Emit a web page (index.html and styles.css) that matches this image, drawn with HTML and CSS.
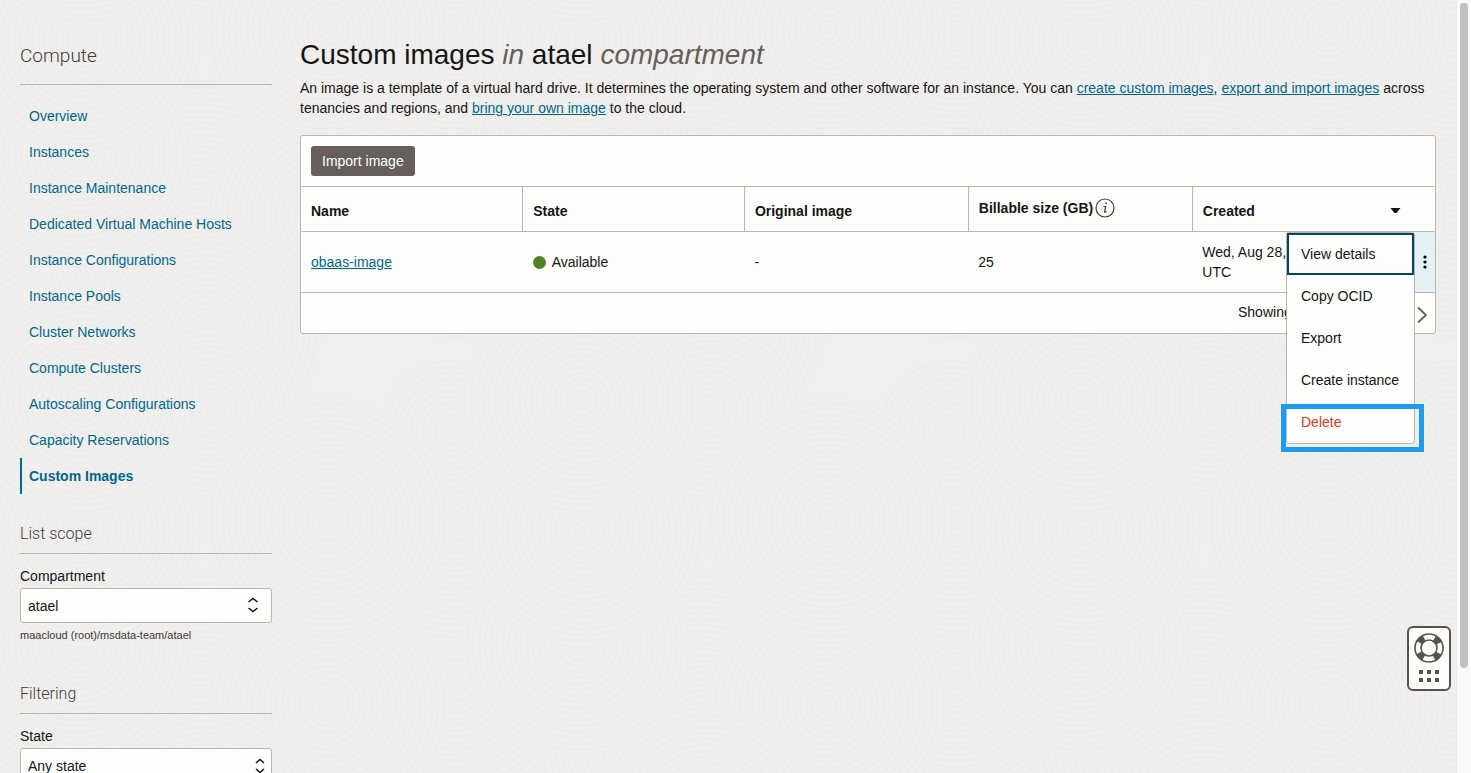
FILE: index.html
```html
<!DOCTYPE html>
<html lang="en">
<head>
<meta charset="utf-8">
<title>Custom images</title>
<link rel="stylesheet" href="styles.css">
</head>
<body>
<svg class="texture" aria-hidden="true">
  <defs>
    <radialGradient id="rings" gradientUnits="userSpaceOnUse" cx="0" cy="0" r="6" spreadMethod="repeat">
      <stop offset="0" stop-color="#f1f0ee"/>
      <stop offset=".5" stop-color="#edecea"/>
      <stop offset="1" stop-color="#f1f0ee"/>
    </radialGradient>
    <g id="tile" fill="url(#rings)">
      <circle r="160" transform="translate(200 330)"/>
      <circle r="150" transform="translate(455 280)"/>
      <circle r="112" transform="translate(78 245)"/>
      <circle r="122" transform="translate(455 120)"/>
      <circle r="70" transform="translate(450 30)"/>
      <circle r="118" transform="translate(83 130)"/>
      <circle r="90" transform="translate(210 10)"/>
      <circle r="120" transform="translate(327 305)"/>
      <circle r="122" transform="translate(328 120)"/>
      <circle r="116" transform="translate(82 0)"/>
      <circle r="116" transform="translate(205 420)"/>
    </g>
    <g id="column">
      <use href="#tile" y="-580"/>
      <use href="#tile" y="-90"/>
      <use href="#tile" y="400"/>
    </g>
  </defs>
  <use href="#column" x="-500"/>
  <use href="#column"/>
  <use href="#column" x="500"/>
  <use href="#column" x="1000"/>
</svg>

<div class="page">
  <aside class="sidebar">
    <h2 class="side-title">Compute</h2>
    <nav class="nav">
      <a class="nav-link" href="#">Overview</a>
      <a class="nav-link" href="#">Instances</a>
      <a class="nav-link" href="#">Instance Maintenance</a>
      <a class="nav-link" href="#">Dedicated Virtual Machine Hosts</a>
      <a class="nav-link" href="#">Instance Configurations</a>
      <a class="nav-link" href="#">Instance Pools</a>
      <a class="nav-link" href="#">Cluster Networks</a>
      <a class="nav-link" href="#">Compute Clusters</a>
      <a class="nav-link" href="#">Autoscaling Configurations</a>
      <a class="nav-link" href="#">Capacity Reservations</a>
      <a class="nav-link current" href="#" aria-current="page">Custom Images</a>
    </nav>

    <section class="side-section">
      <h3 class="side-heading">List scope</h3>
      <label class="field-label" for="compartment">Compartment</label>
      <div class="select-wrap picker">
        <select class="select" id="compartment"><option>atael</option></select>
        <svg class="select-icon" viewBox="0 0 12 16"><path d="M1.5 5 6 1.5 10.500 5M1.500 11 6 14.500 10.500 11"/></svg>
      </div>
      <p class="hint">maacloud (root)/msdata-team/atael</p>
    </section>

    <section class="side-section filtering">
      <h3 class="side-heading">Filtering</h3>
      <label class="field-label" for="state">State</label>
      <div class="select-wrap">
        <select class="select" id="state"><option>Any state</option></select>
        <svg class="select-icon" viewBox="0 0 12 16"><path d="M2 5 6 1.500 10 5M2 11 6 14.500 10 11"/></svg>
      </div>
    </section>
  </aside>

  <main class="main">
    <h1 class="title">Custom images <em>in</em> atael <em>compartment</em></h1>
    <p class="intro">An image is a template of a virtual hard drive. It determines the operating system and other software for an instance. You can <a href="#">create custom images</a>, <a href="#">export and import images</a> across tenancies and regions, and <a href="#">bring your own image</a> to the cloud.</p>

    <div class="panel">
      <div class="toolbar"><button class="btn" type="button">Import image</button></div>
      <table class="table">
        <colgroup><col class="w-a"><col class="w-a"><col class="w-b"><col class="w-b"><col><col class="w-menu"></colgroup>
        <thead>
          <tr>
            <th scope="col">Name</th>
            <th scope="col">State</th>
            <th scope="col">Original image</th>
            <th scope="col"><span class="with-info">Billable size (GB)
              <svg class="info" viewBox="0 0 20 20"><circle cx="10" cy="10" r="9"/><path class="dot" d="M10.500 4.500h1.400v1.700h-1.400z"/><path d="M8.500 8.500h2.200L9.500 14q0 .7 2-.5"/></svg></span></th>
            <th scope="col" colspan="2"><span class="sorted">Created <svg class="caret" viewBox="0 0 10 6"><path d="M0 0h10L6 5H4z"/></svg></span></th>
          </tr>
        </thead>
        <tbody>
          <tr>
            <td><a href="#">obaas-image</a></td>
            <td><span class="status"><i class="status-dot"></i>Available</span></td>
            <td>-</td>
            <td>25</td>
            <td class="created">Wed, Aug 28, 2024, 15:20:05 UTC</td>
            <td class="actions">
              <button class="kebab" type="button" aria-label="Actions"><svg viewBox="0 0 4 14"><circle cx="2" cy="2" r="1.600"/><circle cx="2" cy="7" r="1.600"/><circle cx="2" cy="12" r="1.600"/></svg></button>
              <div class="menu" role="menu">
                <button class="menu-item focused" type="button" role="menuitem">View details</button>
                <button class="menu-item" type="button" role="menuitem">Copy OCID</button>
                <button class="menu-item" type="button" role="menuitem">Export</button>
                <button class="menu-item" type="button" role="menuitem">Create instance</button>
                <button class="menu-item danger" type="button" role="menuitem">Delete</button>
                <div class="marker"></div>
              </div>
            </td>
          </tr>
        </tbody>
      </table>
      <div class="pager">
        <span class="pager-text">Showing 1 item</span>
        <button class="pager-next" type="button" aria-label="Next page"><svg viewBox="0 0 10 18"><path d="M1 1.500 9 9l-8 7.500"/></svg></button>
      </div>
    </div>
  </main>
  <div class="scrollbar"><div class="thumb"></div></div>
</div>

<button class="help" type="button" aria-label="Help">
  <svg class="help-ring" viewBox="0 0 30 30">
    <circle cx="15" cy="15" r="14"/><circle cx="15" cy="15" r="8"/>
    <circle class="band" cx="15" cy="15" r="11"/>
  </svg>
  <svg class="help-grid" viewBox="0 0 20 12"><path d="M0 0h4v4H0zM8 0h4v4H8zM16 0h4v4h-4zM0 8h4v4H0zM8 8h4v4H8zM16 8h4v4h-4z"/></svg>
</button>
</body>
</html>
```
FILE: styles.css
```css
* { box-sizing: border-box; }

body {
  margin: 0;
  height: 100vh;
  overflow: hidden;
  background: #f0efed;
  color: #161513;
  font: 14px/20px "Liberation Sans", Arial, sans-serif;
}

h1, h2, h3, p { margin: 0; }
a { color: #00688c; }
button { font: inherit; color: inherit; margin: 0; padding: 0; border: 0; background: none; }
svg { display: block; }

.texture {
  position: absolute;
  inset: 0;
  width: 100%;
  height: 100%;
  z-index: -1;
}

.page { display: flex; height: 100%; }

/* Sidebar */
.sidebar { flex: none; width: 272px; padding: 42px 0 0 20px; }
.side-title, .side-heading {
  font-family: Roboto, "Liberation Sans", sans-serif;
  font-weight: 300;
  color: #3f3b38;
  border-bottom: 1px solid #bcb6b1;
}
.side-title { font-size: 19px; line-height: 28px; padding-bottom: 14px; }
.side-heading { font-size: 16px; line-height: 20px; padding-bottom: 9px; margin-bottom: 12px; }
.nav { display: flex; flex-direction: column; padding-top: 13px; }
.nav-link { padding: 8px 9px; text-decoration: none; }
.nav-link.current { border-left: 2px solid #00688c; padding-left: 7px; font-weight: bold; }
.side-section { padding-top: 30px; }
.side-section.filtering { padding-top: 41px; }
.field-label { display: block; margin-bottom: 2px; }
.select-wrap { position: relative; }
.select {
  appearance: none;
  display: block;
  width: 100%;
  height: 35px;
  padding: 0 7px;
  border: 1px solid #bcb6b1;
  border-radius: 3px;
  background: #fdfdfc;
  color: inherit;
  font: inherit;
}
.select-icon {
  position: absolute;
  right: 6px;
  top: 10px;
  width: 12px;
  height: 16px;
  fill: none;
  stroke: #161513;
  stroke-width: 1.5;
  pointer-events: none;
}
.picker .select-icon { right: 13px; top: 9px; }
.hint { font-size: 11px; line-height: 16px; padding-top: 4px; color: #3f3b38; }

/* Main column */
.main { flex: 1; min-width: 0; padding: 38px 20px 0 28px; }
.title { font-size: 28px; line-height: 34px; font-weight: normal; }
.title em { color: #665f5b; }
.intro { padding: 6px 0 17px; }
.panel { border: 1px solid #bcb6b1; border-radius: 3px; background: #fdfdfc; }
.toolbar { padding: 10px; }
.btn { height: 30px; padding: 0 11px; border-radius: 3px; background: #665f5b; color: #fff; }

.table { width: 100%; table-layout: fixed; border-collapse: collapse; }
.w-a { width: 19.55%; }
.w-b { width: 19.75%; }
.w-menu { width: 20px; }
.table th, .table td { padding: 0 10px; text-align: left; border-top: 1px solid #bcb6b1; border-bottom: 1px solid #bcb6b1; }
.table th { height: 45px; padding-top: 4px; }
.table th + th { border-left: 1px solid #bcb6b1; }
.table td { height: 61px; }
.with-info { display: flex; align-items: center; gap: 2px; margin-top: -6px; }
.info { width: 20px; height: 20px; fill: none; stroke: #3f3b38; stroke-width: 1.2; }
.info .dot { fill: #3f3b38; stroke: none; }
.sorted { display: flex; align-items: center; justify-content: space-between; padding-right: 24px; }
.caret { width: 11px; height: 6px; fill: #161513; }
.status { display: flex; align-items: center; gap: 6px; }
.status-dot { width: 13px; height: 13px; border-radius: 50%; background: #508223; }

.table .actions { position: relative; padding: 0; background: #e4f1f5; }
.kebab { display: block; width: 100%; }
.kebab svg { width: 4px; height: 14px; margin: 0 auto; }
.menu {
  position: absolute;
  z-index: 1;
  top: 0;
  right: 20px;
  width: 129px;
  border: 1px solid #bcb6b1;
  border-radius: 3px;
  background: #fdfdfc;
}
.menu-item { display: block; width: 100%; height: 42px; padding: 0 14px; text-align: left; white-space: nowrap; }
.menu-item.focused { outline: 2px solid #00485e; outline-offset: -2px; }
.menu-item.danger { color: #d63b25; }
.marker { position: absolute; left: -6px; right: -10px; bottom: -9px; height: 48px; border: 5px solid #1b9cf2; pointer-events: none; }

.pager { display: flex; justify-content: flex-end; align-items: flex-start; padding: 9px 8px 9px 0; }
.pager-text { width: 179px; }
.pager-next svg { width: 10px; height: 18px; margin-top: 4px; fill: none; stroke: #665f5b; stroke-width: 1.8; }

/* Scroll indicator */
.scrollbar { flex: none; width: 15px; padding: 3px; background: #fafafa; border-left: 1px solid #e8e8e8; }
.thumb { width: 8px; height: 86.7%; border-radius: 4px; background: #c1c1c1; }

/* Floating help */
.help {
  position: fixed;
  right: 20px;
  bottom: 82px;
  display: flex;
  flex-direction: column;
  align-items: center;
  gap: 7px;
  padding: 5px 5px 7px;
  border: 2px solid #57524e;
  border-radius: 6px;
  background: #fdfdfc;
}
.help-ring { width: 30px; height: 30px; fill: none; stroke: #57524e; stroke-width: 1.6; }
.help-ring .band { stroke-width: 6; stroke-dasharray: 6.6 10.679; stroke-dashoffset: -5.340; }
.help-grid { width: 20px; height: 12px; fill: #57524e; }
```
